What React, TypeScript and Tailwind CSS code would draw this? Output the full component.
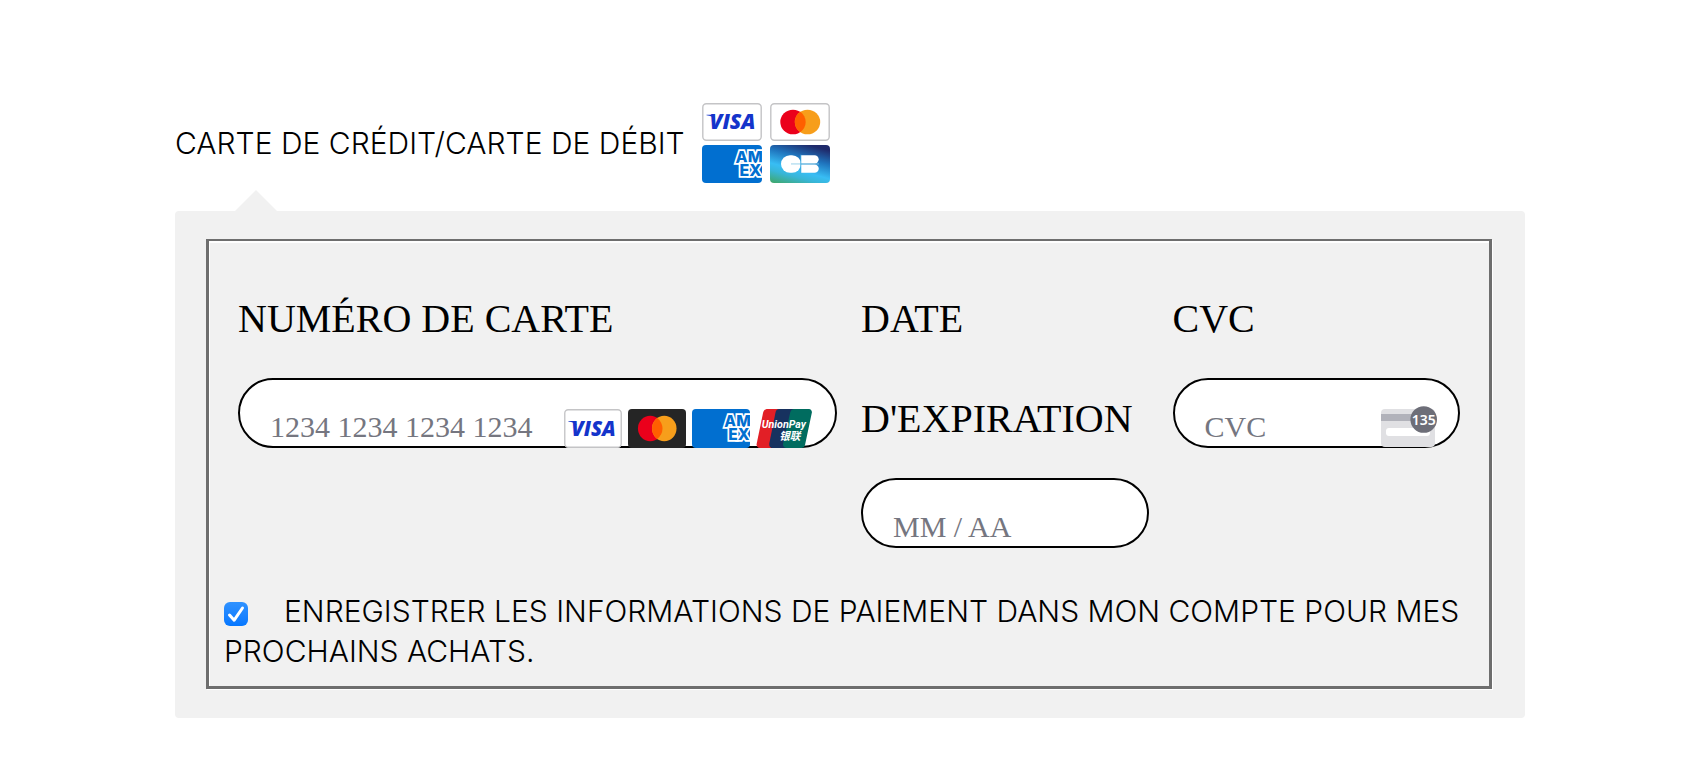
import { useState } from 'react';
import type { InputHTMLAttributes, ReactNode } from 'react';

function VisaCard({ className }: { className: string }) {
  return (
    <svg className={className} viewBox="0 0 60 39" preserveAspectRatio="none" aria-hidden="true">
      <rect x="0.8" y="0.8" width="58.4" height="37.4" rx="3.5" fill="#fff" stroke="#c4c4c6" strokeWidth="1.4" />
      <path d="M4.500 12h7l1.600 4.500C11.500 14.500 8.500 12.800 4.500 12.500z" fill="#1434cb" />
      <text
        x="7.500"
        y="27"
        fontFamily="'Open Sans', sans-serif"
        fontSize="21"
        fontStyle="italic"
        fontWeight="800"
        fill="#1434cb"
      >
        VISA
      </text>
    </svg>
  );
}

function MastercardCard({ className, dark }: { className: string; dark?: boolean }) {
  return (
    <svg className={className} viewBox="0 0 60 39" preserveAspectRatio="none" aria-hidden="true">
      {dark ? (
        <rect width="60" height="39" rx="4" fill="#252525" />
      ) : (
        <rect x="0.8" y="0.8" width="58.4" height="37.4" rx="3.5" fill="#fff" stroke="#c4c4c6" strokeWidth="1.4" />
      )}
      <circle cx="23" cy="19.500" r="12.700" fill="#eb001b" />
      <circle cx="37.500" cy="19.500" r="12.700" fill="#f79e1b" />
      <path d="M30.250 9.100a12.700 12.700 0 0 1 0 20.800a12.700 12.700 0 0 1 0-20.800z" fill="#ff5f00" />
    </svg>
  );
}

function AmexCard({ className }: { className: string }) {
  return (
    <svg className={className} viewBox="0 0 60 39" preserveAspectRatio="none" aria-hidden="true">
      <rect width="60" height="39" rx="4" fill="#016fd0" />
      <text
        fontFamily="Inter, sans-serif"
        fontSize="16"
        fontWeight="800"
        fill="#016fd0"
        stroke="#fff"
        strokeWidth="3.500"
        paintOrder="stroke"
      >
        <tspan x="33.500" y="18.500">AM</tspan>
        <tspan x="37.500" y="31.500">EX</tspan>
      </text>
    </svg>
  );
}

function CbCard({ className }: { className: string }) {
  return (
    <svg className={className} viewBox="0 0 60 39" preserveAspectRatio="none" aria-hidden="true">
      <defs>
        <linearGradient id="cb" x1="0.2" y1="1.050" x2="0.650" y2="0">
          <stop offset="0" stopColor="#3fa870" />
          <stop offset="0.250" stopColor="#38b6d8" />
          <stop offset="0.400" stopColor="#38bdf4" />
          <stop offset="0.700" stopColor="#1f74bd" />
          <stop offset="1" stopColor="#1f2a6b" />
        </linearGradient>
      </defs>
      <rect width="60" height="39" rx="4" fill="url(#cb)" />
      <rect x="11" y="10.500" width="20" height="18" rx="9" fill="#fff" />
      <path d="M31 10.500h13.500a4.200 4.200 0 0 1 0 8.400H31z" fill="#fff" />
      <path d="M31 20h13.500a4.200 4.200 0 0 1 0 8.500H31z" fill="#fff" />
      <path d="M21 19.450h28" stroke="#8ccbe8" strokeWidth="0.900" />
      <path d="M30.800 10v19" stroke="#38a9e0" strokeWidth="0.900" />
    </svg>
  );
}

function UnionPayCard({ className }: { className: string }) {
  return (
    <svg className={className} viewBox="0 0 60 39" preserveAspectRatio="none" aria-hidden="true">
      <path d="M11 0h13l-8 39H4a3.500 3.500 0 0 1-3.300-4.200L7.500 3A4 4 0 0 1 11 0z" fill="#e21f26" />
      <path d="M24 0h16l-8 39H17a3.500 3.500 0 0 1-3.300-4.200L20.300 3A4 4 0 0 1 24 0z" fill="#17325f" />
      <path d="M39 0h15.500a3.200 3.200 0 0 1 3.200 4.100L50.700 36a4 4 0 0 1-3.700 3H31a3.500 3.500 0 0 1-3-4.200L35.500 3A4 4 0 0 1 39 0z" fill="#006c5f" />
      <text
        fontFamily="Roboto, 'Noto Sans CJK SC', sans-serif"
        fontSize="11"
        fontStyle="italic"
        fontWeight="700"
        fill="#fff"
      >
        <tspan x="6" y="19">UnionPay</tspan>
        <tspan x="24" y="31">银联</tspan>
      </text>
    </svg>
  );
}

function CvcIcon() {
  return (
    <svg className="h-[42px] w-14" viewBox="0 0 56 42" aria-hidden="true">
      <path d="M4 3h46a4 4 0 0 1 4 4v30a4 4 0 0 1-4 4H4a4 4 0 0 1-4-4V7a4 4 0 0 1 4-4z" fill="#e0e0e3" />
      <path d="M0 8h54v7H0z" fill="#b1b2ba" />
      <rect x="5" y="22" width="44" height="8" rx="3" fill="#fff" />
      <circle cx="42.700" cy="13.500" r="13.300" fill="#6d6e78" />
      <text
        x="42.700"
        y="18.800"
        textAnchor="middle"
        fontFamily="'Noto Sans', sans-serif"
        fontSize="14"
        fontWeight="600"
        fill="#fff"
      >
        135
      </text>
    </svg>
  );
}

interface FieldProps extends InputHTMLAttributes<HTMLInputElement> {
  id: string;
  label: string;
  wrapperClass?: string;
  children?: ReactNode;
}

function Field({ id, label, wrapperClass, children, ...rest }: FieldProps) {
  return (
    <div className={wrapperClass}>
      <label
        htmlFor={id}
        className="block font-['Liberation_Serif',serif] text-[40px] leading-[100px] text-black"
      >
        {label}
      </label>
      <div className="relative mt-[9px]">
        <input
          id={id}
          type="text"
          inputMode="numeric"
          className="block h-[70px] w-full rounded-full border-2 border-black bg-white pt-7 pl-[30px] font-['Liberation_Serif',serif] text-[30px] text-black placeholder:text-[#757680]"
          {...rest}
        />
        {children}
      </div>
    </div>
  );
}

export default function App() {
  const [saveCard, setSaveCard] = useState(true);

  return (
    <main className="min-h-screen bg-white pt-[103px] pr-[159px] pb-13 pl-[175px] font-[Inter,sans-serif] text-[30px] leading-10 font-light text-black">
      <div className="flex items-center gap-[17px]">
        <h1>CARTE DE CRÉDIT/CARTE DE DÉBIT</h1>
        <div className="grid grid-cols-2 gap-x-2 gap-y-1">
          <VisaCard className="h-[38px] w-15" />
          <MastercardCard className="h-[38px] w-15" />
          <AmexCard className="h-[38px] w-15" />
          <CbCard className="h-[38px] w-15" />
        </div>
      </div>

      <section className="relative mt-7 rounded bg-[#f1f1f1] pt-7 pr-[33px] pb-[29px] pl-[31px]">
        {/* Pointer towards the selected payment method */}
        <svg className="absolute bottom-full left-15 h-[21px] w-[42px]" viewBox="0 0 42 21" aria-hidden="true">
          <path d="M0 21L21 0l21 21z" fill="#f1f1f1" />
        </svg>

        <fieldset className="border-3 border-t-2 border-[#6e6e6e] px-[15px] pt-7 pb-[15px] shadow-[inset_1px_2px_0_#fff,1px_1px_0_#fff]">
          <div className="grid grid-cols-4 gap-x-6 px-3.5">
            <Field
              id="card-number"
              label="NUMÉRO DE CARTE"
              placeholder="1234 1234 1234 1234"
              autoComplete="cc-number"
              wrapperClass="col-span-2"
            >
              <div className="absolute right-[23px] bottom-0 flex gap-1.5">
                <VisaCard className="h-[39px] w-[58px]" />
                <MastercardCard className="h-[39px] w-[58px]" dark />
                <AmexCard className="h-[39px] w-[58px]" />
                <UnionPayCard className="h-[39px] w-[58px]" />
              </div>
            </Field>
            <Field id="card-expiry" label="DATE D'EXPIRATION" placeholder="MM / AA" autoComplete="cc-exp" />
            <Field id="card-cvc" label="CVC" placeholder="CVC" autoComplete="cc-csc">
              <div className="absolute right-[23px] bottom-0">
                <CvcIcon />
              </div>
            </Field>
          </div>

          <label className="mt-[43px] block">
            <span className="relative mr-9 inline-block size-6 align-[-4px]">
              <input
                type="checkbox"
                checked={saveCard}
                onChange={(e) => setSaveCard(e.target.checked)}
                className="peer block size-6 appearance-none rounded-md border border-gray-300 bg-white checked:border-0 checked:bg-linear-to-b checked:from-[#2f92ff] checked:to-[#0477ff]"
              />
              <svg
                className="pointer-events-none absolute inset-0 hidden size-6 peer-checked:block"
                viewBox="0 0 24 24"
                fill="none"
                stroke="#fff"
                strokeWidth="3"
                strokeLinecap="round"
                strokeLinejoin="round"
                aria-hidden="true"
              >
                <path d="M5.500 13l4.700 5.200L18.500 6" />
              </svg>
            </span>
            ENREGISTRER LES INFORMATIONS DE PAIEMENT DANS MON COMPTE POUR MES PROCHAINS ACHATS.
          </label>
        </fieldset>
      </section>
    </main>
  );
}
